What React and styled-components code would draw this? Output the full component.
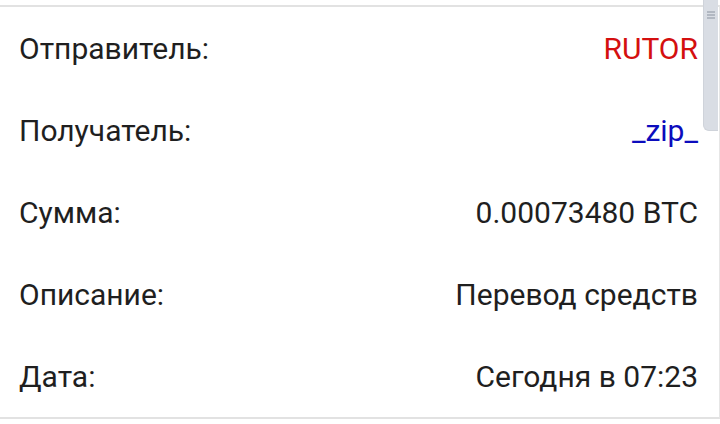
import React from "react";
import styled, { createGlobalStyle } from "styled-components";

const Global = createGlobalStyle`
  html, body { margin: 0; padding: 0; background: #ffffff; }
  body { font-family: Roboto, "Noto Sans", sans-serif; }
`;

const Page = styled.div`
  position: relative;
  width: 720px;
  height: 424px;
  overflow: hidden;
  padding-top: 5px;
  box-sizing: border-box;
`;

const Card = styled.div`
  border-top: 2px solid #e2e2e2;
  border-bottom: 2px solid #e2e2e2;
  border-right: 1px solid #e6e6e6;
  background: #fff;
  display: flex;
  flex-direction: column;
`;

const Row = styled.div`
  height: 82px;
  display: flex;
  align-items: center;
  justify-content: space-between;
  padding: 0 21px 0 19px;
  font-size: 30px;
  color: #1f1f1f;
`;

const Label = styled.span``;

const Value = styled.span`
  color: ${(p) => p.$color || "#1f1f1f"};
`;

const Scroll = styled.div`
  position: absolute;
  top: 0;
  right: 2px;
  width: 15px;
  height: 131px;
  background: #d9dde4;
  border-left: 1px solid #cfd3da;
  border-bottom: 1px solid #cfd3da;
  border-bottom-left-radius: 6px;
  display: flex;
  flex-direction: column;
  align-items: center;
  gap: 1px;
  padding-top: 11px;
  box-sizing: border-box;
`;

const Grip = styled.div`
  width: 8px;
  height: 2px;
  background: #b2b8c2;
`;

const rows = [
  { label: "Отправитель:", value: "RUTOR", color: "#d40f0f" },
  { label: "Получатель:", value: "_zip_", color: "#0c0cbd" },
  { label: "Сумма:", value: "0.00073480 BTC" },
  { label: "Описание:", value: "Перевод средств" },
  { label: "Дата:", value: "Сегодня в 07:23" },
];

export default function App() {
  return (
    <>
      <Global />
      <Page>
        <Card>
          {rows.map((r) => (
            <Row key={r.label}>
              <Label>{r.label}</Label>
              <Value $color={r.color}>{r.value}</Value>
            </Row>
          ))}
        </Card>
        <Scroll>
          <Grip />
          <Grip />
          <Grip />
        </Scroll>
      </Page>
    </>
  );
}
